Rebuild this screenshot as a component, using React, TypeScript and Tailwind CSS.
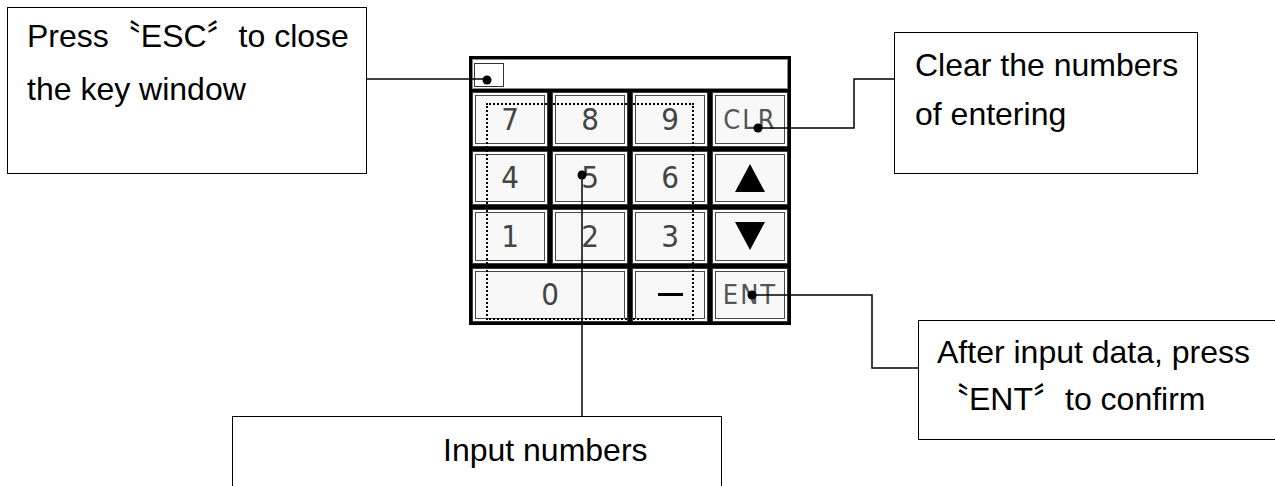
import React from "react";

const calloutFont = {
  fontFamily: '"Liberation Sans", Arial, "Noto Sans CJK SC", sans-serif',
};

const Key = ({
  children,
  className = "",
}: {
  children?: React.ReactNode;
  className?: string;
}) => (
  <div className={`border border-[#3a3a3a] bg-white p-[2px] ${className}`}>
    <div className="flex h-full items-center justify-center border border-[#4a4a4a] bg-[#f8f8f8]">
      {children}
    </div>
  </div>
);

const Digit = ({ n }: { n: string }) => (
  <span className="text-[31px] leading-none text-[#444] font-['Liberation_Sans_Narrow','DejaVu_Sans_Condensed','Liberation_Sans',sans-serif]">
    {n}
  </span>
);

const Keypad = () => {
  return (
    <div className="absolute left-[469px] top-[56px] flex h-[269px] w-[322px] flex-col bg-black p-[3px]">
      {/* display bar with the esc square */}
      <div className="flex h-[30px] items-end border border-[#888] bg-white pb-[1px] pl-[1px]">
        <div className="h-[24px] w-[30px] border border-[#333] bg-white" />
      </div>
      <div className="mt-[3px] grid flex-1 grid-cols-4 grid-rows-4 gap-[4px]">
        <Key><Digit n="7" /></Key>
        <Key><Digit n="8" /></Key>
        <Key><Digit n="9" /></Key>
        <Key>
          <span className="text-[27px] leading-none tracking-[2px] text-[#555] font-['Liberation_Sans_Narrow','DejaVu_Sans_Condensed',sans-serif]">
            CLR
          </span>
        </Key>

        <Key><Digit n="4" /></Key>
        <Key><Digit n="5" /></Key>
        <Key><Digit n="6" /></Key>
        <Key>
          <svg width="32" height="30" viewBox="0 0 32 30">
            <polygon points="16,1 31,29 1,29" fill="#000" />
          </svg>
        </Key>

        <Key><Digit n="1" /></Key>
        <Key><Digit n="2" /></Key>
        <Key><Digit n="3" /></Key>
        <Key>
          <svg width="32" height="30" viewBox="0 0 32 30">
            <polygon points="1,1 31,1 16,29" fill="#000" />
          </svg>
        </Key>

        <Key className="col-span-2"><Digit n="0" /></Key>
        <Key>
          <div className="h-[3px] w-[25px] bg-black" />
        </Key>
        <Key>
          <span className="text-[27px] leading-none tracking-[2px] text-[#555] font-['Liberation_Sans_Narrow','DejaVu_Sans_Condensed',sans-serif]">
            ENT
          </span>
        </Key>
      </div>
      {/* dotted frame around the number keys */}
      <div className="absolute left-[17px] top-[47px] h-[217px] w-[208px] border-2 border-dotted border-black" />
    </div>
  );
};

const Connectors = () => (
  <svg
    className="pointer-events-none absolute left-0 top-0"
    width="1275"
    height="486"
    viewBox="0 0 1275 486"
  >
    <g stroke="#000" strokeWidth="1.5" fill="none">
      <path d="M367 79 H487" />
      <path d="M758 128 H854 V79 H894" />
      <path d="M582 175 V416" />
      <path d="M752 295 H872 V368 H918" />
    </g>
    <g fill="#000">
      <circle cx="487" cy="80" r="4.5" />
      <circle cx="758" cy="128" r="4.5" />
      <circle cx="582" cy="175" r="4.5" />
      <circle cx="752" cy="295" r="4.5" />
    </g>
  </svg>
);

export default function App() {
  return (
    <div
      className="relative h-[486px] w-[1275px] overflow-hidden bg-white text-black"
      style={calloutFont}
    >
      <div className="absolute left-[7px] top-[7px] h-[167px] w-[360px] whitespace-nowrap border-[1.5px] border-black pl-[19px] pt-[2px] text-[32px] leading-[53px]">
        Press〝ESC〞to close
        <br />
        the key window
      </div>

      <Keypad />

      <div className="absolute left-[894px] top-[32px] h-[142px] w-[304px] whitespace-nowrap border-[1.5px] border-black pl-[20px] pt-[8px] text-[32px] leading-[49px]">
        Clear the numbers
        <br />
        of entering
      </div>

      <div className="absolute left-[918px] top-[320px] h-[120px] w-[380px] whitespace-nowrap border-[1.5px] border-black pl-[18px] pt-[8px] text-[32px] leading-[47px]">
        After input data, press
        <br />
        〝ENT〞to confirm
      </div>

      <div className="absolute left-[232px] top-[416px] h-[90px] w-[490px] whitespace-nowrap border-[1.5px] border-black pl-[210px] pt-[10px] text-[32px] leading-[47px]">
        Input numbers
      </div>

      <Connectors />
    </div>
  );
}
